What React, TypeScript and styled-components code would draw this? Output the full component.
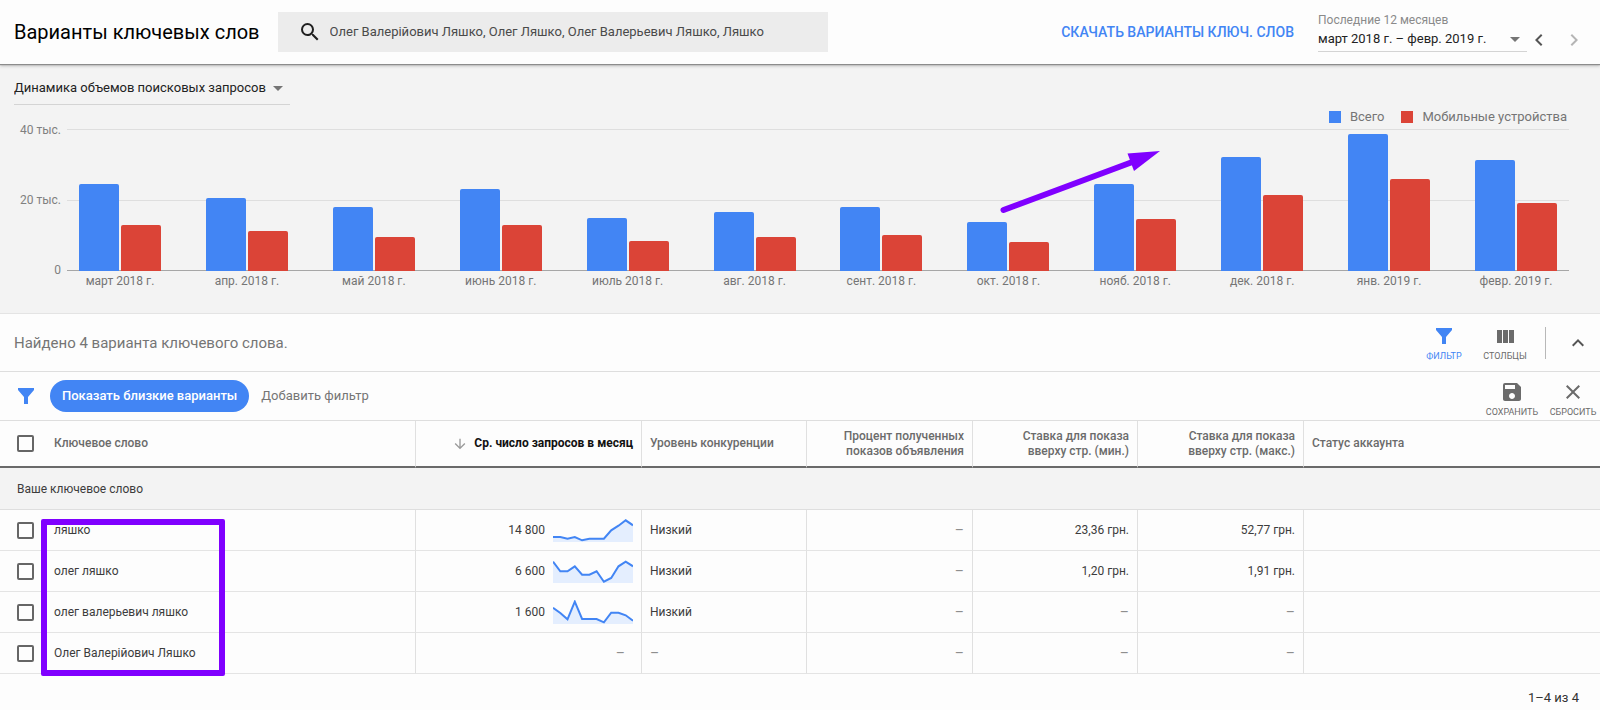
import React from "react";
import styled, { createGlobalStyle, css } from "styled-components";

const BLUE = "#4285f4";
const RED = "#db4437";
const MARK = "#8000ff";

const GlobalStyle = createGlobalStyle`
  *, *::before, *::after { box-sizing: border-box; }
  body {
    margin: 0;
    background: #fdfdfd;
    color: #3c3c3c;
    font-family: Roboto, "Noto Sans", sans-serif;
    font-size: 13px;
    line-height: 16px;
  }
  button, input, select { font: inherit; color: inherit; }
`;

/* ---------- header ---------- */

const Header = styled.header`
  position: relative;
  z-index: 1;
  display: flex;
  align-items: center;
  height: 64px;
  padding: 0 14px;
  background: #fdfdfd;
  box-shadow: 0 1px 1px #8c8c8c, 0 2px 3px #bdbdbd;
`;

const Title = styled.h1`
  margin: 0 18px 0 0;
  font-size: 20px;
  font-weight: 400;
  line-height: 24px;
  color: #000;
  white-space: nowrap;
`;

const SearchBox = styled.label`
  display: flex;
  align-items: center;
  gap: 8px;
  flex: 0 1 550px;
  height: 40px;
  padding: 0 20px;
  background: #ececec;
  color: #1f1f1f;
`;

const SearchInput = styled.input`
  flex: 1;
  min-width: 0;
  padding: 0;
  border: 0;
  outline: 0;
  background: none;
  font-size: 13px;
  color: #4a4a4a;
`;

const HeaderActions = styled.div`
  display: flex;
  align-items: center;
  margin-left: auto;
`;

const DownloadButton = styled.button`
  margin-right: 24px;
  padding: 0;
  border: 0;
  background: none;
  color: ${BLUE};
  font-size: 14px;
  font-weight: 500;
  white-space: nowrap;
  cursor: pointer;
`;

const DateField = styled.div`
  display: flex;
  flex-direction: column;
  width: 209px;
`;

const DateLabel = styled.label`
  font-size: 12px;
  color: #8a8a8a;
`;

const SelectWrap = styled.div<{ $height: number }>`
  display: flex;
  align-items: center;
  height: ${(p) => p.$height}px;
  padding-bottom: 2px;
  border-bottom: 1px solid #d4d4d4;
`;

const Select = styled.select`
  flex: 1;
  min-width: 0;
  padding: 0;
  border: 0;
  outline: 0;
  appearance: none;
  background: none;
  color: #222;
  font-size: 13px;
  cursor: pointer;
`;

const IconButton = styled.button<{ $faint?: boolean }>`
  display: flex;
  align-items: center;
  justify-content: center;
  width: 24px;
  height: 24px;
  padding: 0;
  border: 0;
  background: none;
  color: ${(p) => (p.$faint ? "#b5b5b5" : "#555")};
  cursor: pointer;
`;

const PagerButtons = styled.div`
  display: flex;
  gap: 11px;
  align-self: flex-end;
`;

/* ---------- chart ---------- */

const ChartPanel = styled.section`
  position: relative;
  padding: 9px 31px 24px 14px;
  background: #f3f3f3;
  border-bottom: 1px solid #e4e4e4;
`;

const MetricSelect = styled.div`
  width: 276px;
`;

const Legend = styled.div`
  display: flex;
  justify-content: flex-end;
  gap: 17px;
  margin: 4px 2px 4px 0;
`;

const LegendItem = styled.span<{ $color: string }>`
  display: flex;
  align-items: center;
  gap: 9px;
  color: #757575;
  font-size: 13px;
  &::before {
    content: "";
    width: 12px;
    height: 12px;
    background: ${(p) => p.$color};
  }
`;

const ChartBody = styled.div`
  display: flex;
  align-items: flex-start;
  gap: 6px;
`;

const YAxis = styled.div`
  display: flex;
  flex-direction: column;
  justify-content: space-between;
  width: 47px;
  height: 156px;
  margin: -7px 0;
  font-size: 12px;
  color: #808080;
  text-align: right;
`;

const Plot = styled.div`
  flex: 1;
`;

const plotRow = css`
  display: flex;
  justify-content: space-between;
  padding: 0 12px;
`;

const Bars = styled.div`
  ${plotRow}
  height: 142px;
  background:
    linear-gradient(#dedede, #dedede) 0 0 / 100% 1px no-repeat,
    linear-gradient(#dedede, #dedede) 0 71px / 100% 1px no-repeat,
    linear-gradient(#a6a6a6, #a6a6a6) 0 141px / 100% 1px no-repeat;
`;

const BarPair = styled.div`
  display: flex;
  align-items: flex-end;
  gap: 2px;
  width: 82px;
`;

const Bar = styled.div<{ $color: string }>`
  flex: 1;
  border-radius: 2px 2px 0 0;
  background: ${(p) => p.$color};
`;

const Months = styled.div`
  ${plotRow}
  margin-top: 2px;
`;

const Month = styled.span`
  width: 82px;
  font-size: 12px;
  color: #757575;
  text-align: center;
  white-space: nowrap;
`;

const TrendArrow = styled.svg`
  position: absolute;
  top: 80px;
  left: 62.5%;
`;

/* ---------- toolbars ---------- */

const Toolbar = styled.div<{ $height: number }>`
  display: flex;
  align-items: center;
  height: ${(p) => p.$height}px;
  border-bottom: 1px solid #dedede;
`;

const FoundText = styled.p`
  margin: 0 auto 0 14px;
  font-size: 15px;
  line-height: 20px;
  color: #757575;
`;

const ToolGroup = styled.div<{ $low?: boolean }>`
  display: flex;
  gap: 7px;
  padding-top: ${(p) => (p.$low ? 6 : 0)}px;
`;

const ToolButton = styled.button<{ $active?: boolean }>`
  display: flex;
  flex-direction: column;
  align-items: center;
  width: 54px;
  padding: 0;
  border: 0;
  background: none;
  color: ${(p) => (p.$active ? BLUE : "#6b6b6b")};
  font-size: 9px;
  line-height: 12px;
  cursor: pointer;
  svg { margin-bottom: 2px; }
`;

const Divider = styled.span`
  width: 1px;
  height: 32px;
  margin: 0 20px 0 13px;
  background: #b8b8b8;
`;

const CollapseSlot = styled.div`
  padding-right: 10px;
`;

const FilterIconSlot = styled.span`
  display: flex;
  width: 50px;
  padding-left: 14px;
  color: ${BLUE};
`;

const Chip = styled.button`
  height: 32px;
  padding: 0 12px;
  border: 0;
  border-radius: 16px;
  background: ${BLUE};
  color: #fff;
  font-size: 13px;
  font-weight: 500;
  cursor: pointer;
`;

const AddFilter = styled.button`
  margin: 0 auto 0 12px;
  padding: 0;
  border: 0;
  background: none;
  color: #757575;
  font-size: 13px;
  cursor: pointer;
`;

/* ---------- table ---------- */

const TableWrap = styled.div`
  position: relative;
`;

const Table = styled.table`
  width: 100%;
  table-layout: fixed;
  border-collapse: separate;
  border-spacing: 0;
`;

const Col = styled.col<{ $width?: string }>`
  width: ${(p) => p.$width ?? "auto"};
`;

type CellProps = { $right?: boolean; $plain?: boolean };

const cell = css<CellProps>`
  padding: 0 8px;
  text-align: ${(p) => (p.$right ? "right" : "left")};
  border-right: ${(p) => (p.$plain ? "0" : "1px solid #e0e0e0")};
`;

const Th = styled.th<CellProps & { $sorted?: boolean }>`
  ${cell}
  height: 47px;
  padding-left: ${(p) => (p.$right ? 32 : 8)}px;
  border-bottom: 2px solid #6a6a6a;
  font-size: 12px;
  font-weight: ${(p) => (p.$sorted ? 700 : 500)};
  line-height: 15px;
  color: ${(p) => (p.$sorted ? "#111" : "#6b6b6b")};
`;

const Td = styled.td<CellProps>`
  ${cell}
  height: 41px;
  border-bottom: 1px solid #e4e4e4;
  font-size: 12px;
  white-space: nowrap;
`;

const GroupCell = styled.th`
  height: 42px;
  padding: 0 17px;
  border-bottom: 1px solid #dedede;
  background: #f3f3f3;
  font-size: 12px;
  font-weight: 400;
  text-align: left;
`;

const Checkbox = styled.input`
  display: block;
  width: 17px;
  height: 17px;
  margin: 0 0 0 9px;
  appearance: none;
  border: 2px solid #666;
  border-radius: 2px;
`;

const SortLabel = styled.span`
  display: flex;
  align-items: center;
  justify-content: flex-end;
  gap: 6px;
  white-space: nowrap;
`;

const Volume = styled.span`
  display: flex;
  align-items: center;
  justify-content: flex-end;
  gap: 8px;
`;

const Dash = styled.span<{ $inset?: boolean }>`
  margin-right: ${(p) => (p.$inset ? 8 : 0)}px;
  font-size: 14px;
  color: #8e8e8e;
`;

const Highlight = styled.div`
  position: absolute;
  top: 98px;
  left: 41px;
  width: 184px;
  height: 157px;
  border: 6px solid ${MARK};
  border-radius: 2px;
  pointer-events: none;
`;

const Footer = styled.footer`
  padding: 16px 21px 3px;
  text-align: right;
  color: #333;
`;

/* ---------- icons ---------- */

const Icon = ({ d, size = 24, color }: { d: string; size?: number; color?: string }) => (
  <svg width={size} height={size} viewBox="0 0 24 24" fill={color ?? "currentColor"} aria-hidden="true">
    <path d={d} />
  </svg>
);

const SEARCH =
  "M15.5 14h-.79l-.28-.27A6.471 6.471 0 0 0 16 9.5 6.5 6.5 0 1 0 9.5 16c1.61 0 3.09-.59 4.23-1.57l.27.28v.79l5 4.99L20.49 19l-4.99-5zm-6 0C7.01 14 5 11.99 5 9.5S7.01 5 9.5 5 14 7.01 14 9.5 11.99 14 9.5 14z";
const DROP = "M7 10l5 5 5-5z";
const LEFT = "M15.41 7.41 14 6l-6 6 6 6 1.41-1.41L10.83 12z";
const RIGHT = "M10 6 8.59 7.41 13.17 12l-4.58 4.59L10 18l6-6z";
const UP = "M12 8l-6 6 1.41 1.41L12 10.83l4.59 4.58L18 14z";
const FUNNEL = "M4 4h16v2l-6 7v7h-4v-7L4 6z";
const COLUMNS = "M4 6h5v13H4zM10 6h5v13h-5zM16 6h5v13h-5z";
const SAVE =
  "M17 3H5a2 2 0 0 0-2 2v14c0 1.1.89 2 2 2h14c1.1 0 2-.9 2-2V7l-4-4zm-5 16c-1.66 0-3-1.34-3-3s1.34-3 3-3 3 1.34 3 3-1.34 3-3 3zm3-10H5V5h10v4z";
const CLOSE = "M19 6.41 17.59 5 12 10.59 6.41 5 5 6.41 10.59 12 5 17.59 6.41 19 12 13.41 17.59 19 19 17.59 13.41 12z";
const DOWN_ARROW = "M20 12l-1.41-1.41L13 16.17V4h-2v12.17l-5.58-5.59L4 12l8 8z";

const Sparkline = ({ values }: { values: number[] }) => {
  const line = values.map((y, i) => `${((i * 80) / (values.length - 1)).toFixed(1)},${y}`).join(" ");
  return (
    <svg width="80" height="24" viewBox="0 0 80 24" aria-hidden="true">
      <polygon points={`0,24 ${line} 80,24`} fill="#e4eefe" />
      <polyline points={line} fill="none" stroke={BLUE} strokeWidth="2" />
    </svg>
  );
};

/* ---------- data ---------- */

const months = [
  { name: "март 2018 г.", all: 87, mobile: 46 },
  { name: "апр. 2018 г.", all: 73, mobile: 40 },
  { name: "май 2018 г.", all: 64, mobile: 34 },
  { name: "июнь 2018 г.", all: 82, mobile: 46 },
  { name: "июль 2018 г.", all: 53, mobile: 30 },
  { name: "авг. 2018 г.", all: 59, mobile: 34 },
  { name: "сент. 2018 г.", all: 64, mobile: 36 },
  { name: "окт. 2018 г.", all: 49, mobile: 29 },
  { name: "нояб. 2018 г.", all: 87, mobile: 52 },
  { name: "дек. 2018 г.", all: 114, mobile: 76 },
  { name: "янв. 2019 г.", all: 137, mobile: 92 },
  { name: "февр. 2019 г.", all: 111, mobile: 68 },
];

type Row = { keyword: string; volume?: string; trend?: number[]; level?: string; low?: string; high?: string };

const rows: Row[] = [
  {
    keyword: "ляшко",
    volume: "14 800",
    trend: [19, 19, 20.7, 19, 22.3, 20.7, 20.7, 20.7, 12.3, 7.7, 2.3, 7.3],
    level: "Низкий",
    low: "23,36 грн.",
    high: "52,77 грн.",
  },
  {
    keyword: "олег ляшко",
    volume: "6 600",
    trend: [2.7, 12.3, 12.3, 7.3, 15.7, 15.7, 12.3, 22.7, 19, 7.3, 2.7, 7.3],
    level: "Низкий",
    low: "1,20 грн.",
    high: "1,91 грн.",
  },
  {
    keyword: "олег валерьевич ляшко",
    volume: "1 600",
    trend: [7.7, 13, 19.3, 1.7, 19, 19, 19, 22.3, 12.7, 12.7, 15.3, 20.7],
    level: "Низкий",
  },
  { keyword: "Олег Валерійович Ляшко" },
];

const orDash = (text?: string) => text ?? <Dash>–</Dash>;

export default function App() {
  return (
    <>
      <GlobalStyle />
      <Header>
        <Title>Варианты ключевых слов</Title>
        <SearchBox>
          <Icon d={SEARCH} />
          <SearchInput
            aria-label="Поиск"
            defaultValue="Олег Валерійович Ляшко, Олег Ляшко, Олег Валерьевич Ляшко, Ляшко"
          />
        </SearchBox>
        <HeaderActions>
          <DownloadButton>СКАЧАТЬ ВАРИАНТЫ КЛЮЧ. СЛОВ</DownloadButton>
          <DateField>
            <DateLabel htmlFor="period">Последние 12 месяцев</DateLabel>
            <SelectWrap $height={24}>
              <Select id="period">
                <option>март 2018 г. – февр. 2019 г.</option>
              </Select>
              <Icon d={DROP} color="#757575" />
            </SelectWrap>
          </DateField>
          <PagerButtons>
            <IconButton aria-label="Назад"><Icon d={LEFT} /></IconButton>
            <IconButton aria-label="Вперед" $faint><Icon d={RIGHT} /></IconButton>
          </PagerButtons>
        </HeaderActions>
      </Header>

      <main>
        <ChartPanel>
          <MetricSelect>
            <SelectWrap $height={32}>
              <Select aria-label="Показатель">
                <option>Динамика объемов поисковых запросов</option>
              </Select>
              <Icon d={DROP} color="#757575" />
            </SelectWrap>
          </MetricSelect>
          <Legend>
            <LegendItem $color={BLUE}>Всего</LegendItem>
            <LegendItem $color={RED}>Мобильные устройства</LegendItem>
          </Legend>
          <ChartBody>
            <YAxis>
              <span>40 тыс.</span>
              <span>20 тыс.</span>
              <span>0</span>
            </YAxis>
            <Plot>
              <Bars>
                {months.map((m) => (
                  <BarPair key={m.name}>
                    <Bar $color={BLUE} style={{ height: m.all }} />
                    <Bar $color={RED} style={{ height: m.mobile }} />
                  </BarPair>
                ))}
              </Bars>
              <Months>
                {months.map((m) => (
                  <Month key={m.name}>{m.name}</Month>
                ))}
              </Months>
            </Plot>
          </ChartBody>
          <TrendArrow width="164" height="74" viewBox="0 0 164 74" aria-hidden="true">
            <path d="M3.500 66 131 18.500" stroke={MARK} strokeWidth="6" strokeLinecap="round" />
            <path d="M160 7 127.500 9.500 134 27z" fill={MARK} />
          </TrendArrow>
        </ChartPanel>

        <Toolbar $height={58}>
          <FoundText>Найдено 4 варианта ключевого слова.</FoundText>
          <ToolGroup>
            <ToolButton $active><Icon d={FUNNEL} />ФИЛЬТР</ToolButton>
            <ToolButton><Icon d={COLUMNS} />СТОЛБЦЫ</ToolButton>
          </ToolGroup>
          <Divider />
          <CollapseSlot>
            <IconButton aria-label="Свернуть"><Icon d={UP} /></IconButton>
          </CollapseSlot>
        </Toolbar>

        <Toolbar $height={49}>
          <FilterIconSlot><Icon d={FUNNEL} /></FilterIconSlot>
          <Chip>Показать близкие варианты</Chip>
          <AddFilter>Добавить фильтр</AddFilter>
          <ToolGroup $low>
            <ToolButton><Icon d={SAVE} />СОХРАНИТЬ</ToolButton>
            <ToolButton><Icon d={CLOSE} />СБРОСИТЬ</ToolButton>
          </ToolGroup>
        </Toolbar>

        <TableWrap>
          <Table>
            <colgroup>
              <Col $width="46px" />
              <Col $width="370px" />
              <Col $width="226px" />
              <Col $width="165px" />
              <Col $width="166px" />
              <Col $width="165px" />
              <Col $width="166px" />
              <Col />
            </colgroup>
            <thead>
              <tr>
                <Th $plain><Checkbox type="checkbox" aria-label="Выбрать все" /></Th>
                <Th>Ключевое слово</Th>
                <Th $right $sorted>
                  <SortLabel>
                    <Icon d={DOWN_ARROW} size={16} color="#9a9a9a" />
                    Ср. число запросов в месяц
                  </SortLabel>
                </Th>
                <Th>Уровень конкуренции</Th>
                <Th $right>Процент полученных показов объявления</Th>
                <Th $right>Ставка для показа вверху стр. (мин.)</Th>
                <Th $right>Ставка для показа вверху стр. (макс.)</Th>
                <Th $plain>Статус аккаунта</Th>
              </tr>
            </thead>
            <tbody>
              <tr>
                <GroupCell colSpan={8} scope="rowgroup">Ваше ключевое слово</GroupCell>
              </tr>
              {rows.map((r) => (
                <tr key={r.keyword}>
                  <Td $plain><Checkbox type="checkbox" aria-label={r.keyword} /></Td>
                  <Td>{r.keyword}</Td>
                  <Td $right>
                    {r.trend ? (
                      <Volume>
                        {r.volume}
                        <Sparkline values={r.trend} />
                      </Volume>
                    ) : (
                      <Dash $inset>–</Dash>
                    )}
                  </Td>
                  <Td>{orDash(r.level)}</Td>
                  <Td $right>{orDash()}</Td>
                  <Td $right>{orDash(r.low)}</Td>
                  <Td $right>{orDash(r.high)}</Td>
                  <Td $plain />
                </tr>
              ))}
            </tbody>
          </Table>
          <Highlight />
        </TableWrap>
        <Footer>1–4 из 4</Footer>
      </main>
    </>
  );
}
